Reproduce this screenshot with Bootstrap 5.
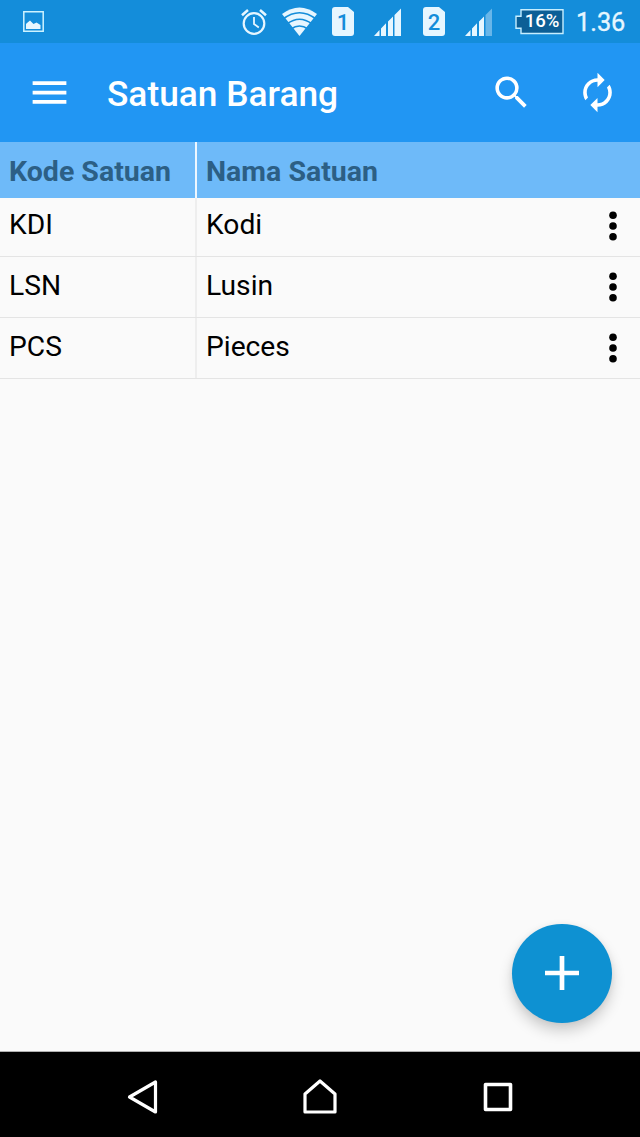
<!DOCTYPE html>
<html lang="id">
<head>
<meta charset="utf-8">
<meta name="viewport" content="width=device-width, initial-scale=1">
<title>Satuan Barang</title>
<link href="https://cdn.jsdelivr.net/npm/bootstrap@5.3.0/dist/css/bootstrap.min.css" rel="stylesheet">
<style>
body { font-family: Roboto, "Liberation Sans", sans-serif; background: #fafafa; color: #000; height: 1137px; overflow: hidden; }
svg { display: block; flex: none; }
.status-bar { height: 43px; background: #148dda; color: #e6f6ff; padding: 0 14px 0 22px; }
.battery { width: 49px; height: 26px; margin-left: 23px; }
.battery-label { inset: -1px 0 0 5px; font-size: 18.5px; font-weight: 500; line-height: 26px; text-align: center; color: #fff; }
.clock { font-size: 25.3px; line-height: 43px; width: 50px; margin-left: 12px; padding-top: 1px; white-space: nowrap; -webkit-text-stroke: .35px currentColor; }
.wifi { margin-left: 15px; }
.sim-one { margin-left: 15px; }
.sim-two { margin-left: 22px; }
.signal { margin-left: 20px; }
.app-bar { height: 99px; background: #2196f3; padding: 0 21px 0 27px; color: #fff; }
.app-title { font-size: 35.3px; line-height: 44px; font-weight: 500; margin: 2px 0 0 35px; }
.app-bar .btn { border: 0; padding: 0; color: #fff; }
.refresh { margin-left: 43px; }
.grid-line { height: 61px; border-bottom: 1px solid #e4e4e4; font-size: 28.2px; line-height: 34px; }
.grid-line:nth-child(2) { height: 59px; }
.grid-line:nth-child(2) .btn { padding-bottom: 3px; }
.grid-head { height: 56px; background: #6ebaf9; color: #2c5f85; font-weight: 700; border: 0; font-size: 28.5px; }
.code-col { width: 197px; padding-left: 9px; border-right: 2px solid #eee; }
.grid-head .code-col { border-color: #eef7ff; }
.name-col { padding-left: 9px; }
.grid-line .btn { width: 54px; padding: 0; border: 0; }
.cell-text { padding-top: 12px; }
.grid-line:nth-child(2) .cell-text { padding-top: 10px; }
.grid-head .cell-text { padding-top: 13px; }
.fab { right: 28.5px; bottom: 28px; width: 99.5px; height: 99.5px; background: #0e91d2 !important; box-shadow: 0 8px 14px rgba(0,0,0,.18), 0 1px 6px rgba(0,0,0,.06); }
.nav-bar { height: 86px; background: #000; border-top: 1px solid #b0b0b0; padding: 5px 53px 0; }
</style>
</head>
<body class="d-flex flex-column">
<header>
  <div class="status-bar d-flex align-items-center justify-content-between">
    <svg width="23" height="23" viewBox="0 0 23 23"><path d="M1.8 1.8h19.4v19.4H1.8z" fill="none" stroke="#cdf3ff" stroke-width="1.5"/><path d="M4 19v-5l1-1 3-2.500 3.500 3.500 3-1.500 4 2.500V19z" fill="#e6f6ff"/></svg>
    <div class="d-flex align-items-center">
      <svg width="26" height="28" viewBox="0 0 26 28" fill="none" stroke="currentColor"><circle cx="13" cy="15.500" r="10.300" stroke-width="2.200"/><path d="M13 9v7l4.800 3.400" stroke-width="1.800"/><path d="M1 7.200 7 2M25 7.200 19 2" stroke-width="2.600"/></svg>
      <svg class="wifi" width="35" height="29" viewBox="0 0 35 29"><path d="M0 7Q17.5-6 35 7L17.5 29z" fill="currentColor"/><path d="M1 12Q17.5-.5 34 12M5 17Q17.5 7.500 30 17M9 22Q17.5 16 26 22" fill="none" stroke="#148dda" stroke-width="1.700"/></svg>
      <svg class="sim-one" width="22" height="29" viewBox="0 0 22 29"><path d="M3 0h13l6 5v21a3 3 0 0 1-3 3H3a3 3 0 0 1-3-3V3a3 3 0 0 1 3-3z" fill="currentColor"/><text x="11" y="22.500" text-anchor="middle" font-size="22" font-weight="500" fill="#148dda">1</text></svg>
      <svg class="signal" width="27" height="28" viewBox="0 0 27 28" fill="currentColor"><path d="M0 28 5.500 22v6zM7 28v-7.500l5-5.200V28zM14 28V13.500l5-5V28zM20.500 28V7L27 .5V28z"/></svg>
      <svg class="sim-two" width="22" height="29" viewBox="0 0 22 29"><path d="M3 0h13l6 5v21a3 3 0 0 1-3 3H3a3 3 0 0 1-3-3V3a3 3 0 0 1 3-3z" fill="currentColor"/><text x="11" y="22.500" text-anchor="middle" font-size="22" font-weight="500" fill="#148dda">2</text></svg>
      <svg class="signal" width="27" height="28" viewBox="0 0 27 28" fill="currentColor"><path d="M0 28 5.500 22v6zM7 28v-7.500l5-5.200V28zM14 28V13.500l5-5V28z"/><path d="M20.500 28V7L27 .5V28z" opacity=".4"/></svg>
      <div class="battery position-relative">
        <svg width="49" height="26" viewBox="0 0 49 26"><path d="M6 .8h42v23.700H6v-5.300H1v-12h5z" fill="#0c5f96" stroke="#c6eeff" stroke-width="1.400"/></svg>
        <span class="battery-label position-absolute">16%</span>
      </div>
      <span class="clock">1.36</span>
    </div>
  </div>
  <nav class="app-bar d-flex align-items-center">
    <button class="btn" aria-label="Menu"><svg width="45" height="45" viewBox="0 0 24 24" fill="currentColor"><path d="M3 18h18v-2H3v2zm0-5h18v-2H3v2zm0-7v2h18V6H3z"/></svg></button>
    <h1 class="app-title mb-0">Satuan Barang</h1>
    <button class="btn ms-auto" aria-label="Cari"><svg width="43" height="43" viewBox="0 0 24 24" fill="currentColor"><path d="M15.500 14h-.79l-.28-.27A6.471 6.471 0 0 0 16 9.500 6.500 6.500 0 1 0 9.500 16c1.610 0 3.090-.59 4.230-1.570l.27.280v.79l5 4.990L20.490 19l-4.990-5zm-6 0C7.010 14 5 11.990 5 9.500S7.010 5 9.500 5 14 7.010 14 9.500 11.990 14 9.500 14z"/></svg></button>
    <button class="btn refresh" aria-label="Segarkan"><svg width="43" height="43" viewBox="0 0 24 24" fill="currentColor"><path d="M12 6v3l4-4-4-4v3c-4.420 0-8 3.580-8 8 0 1.570.46 3.030 1.240 4.260L6.700 14.800A5.870 5.870 0 0 1 6 12c0-3.310 2.690-6 6-6zm6.760 1.740L17.300 9.200c.44.840.7 1.790.7 2.800 0 3.310-2.690 6-6 6v-3l-4 4 4 4v-3c4.420 0 8-3.580 8-8 0-1.570-.46-3.030-1.240-4.260z"/></svg></button>
  </nav>
</header>
<main class="flex-grow-1 position-relative">
  <div class="grid-line grid-head d-flex"><div class="code-col cell-text">Kode Satuan</div><div class="name-col cell-text">Nama Satuan</div></div>
  <div class="grid-line d-flex"><div class="code-col cell-text">KDI</div><div class="name-col cell-text flex-grow-1">Kodi</div><button class="btn" aria-label="Opsi"><svg class="mx-auto" width="8" height="30" viewBox="0 0 8 30"><circle cx="4" cy="4.300" r="3.800"/><circle cx="4" cy="15" r="3.800"/><circle cx="4" cy="25.700" r="3.800"/></svg></button></div>
  <div class="grid-line d-flex"><div class="code-col cell-text">LSN</div><div class="name-col cell-text flex-grow-1">Lusin</div><button class="btn" aria-label="Opsi"><svg class="mx-auto" width="8" height="30" viewBox="0 0 8 30"><circle cx="4" cy="4.300" r="3.800"/><circle cx="4" cy="15" r="3.800"/><circle cx="4" cy="25.700" r="3.800"/></svg></button></div>
  <div class="grid-line d-flex"><div class="code-col cell-text">PCS</div><div class="name-col cell-text flex-grow-1">Pieces</div><button class="btn" aria-label="Opsi"><svg class="mx-auto" width="8" height="30" viewBox="0 0 8 30"><circle cx="4" cy="4.300" r="3.800"/><circle cx="4" cy="15" r="3.800"/><circle cx="4" cy="25.700" r="3.800"/></svg></button></div>
  <button class="fab btn rounded-circle border-0 position-absolute d-flex align-items-center justify-content-center p-0" aria-label="Tambah"><svg width="34" height="34" viewBox="0 0 34 34"><path d="M17 0v34M0 17h34" stroke="#fff" stroke-width="4.700"/></svg></button>
</main>
<footer class="nav-bar d-flex align-items-center justify-content-around">
  <svg width="36" height="36" viewBox="0 0 36 36" fill="none" stroke="#fff" stroke-width="3.200" stroke-linejoin="round"><path d="M31.500 3v30L5.500 18z"/></svg>
  <svg width="36" height="36" viewBox="0 0 36 36" fill="none" stroke="#fff" stroke-width="3.200" stroke-linejoin="round"><path d="M18 2 33 15v18H3V15z"/></svg>
  <svg width="36" height="36" viewBox="0 0 36 36" fill="none" stroke="#fff" stroke-width="3.600" stroke-linejoin="round"><path d="M5.500 5.500h25v25h-25z"/></svg>
</footer>
<script src="https://cdn.jsdelivr.net/npm/bootstrap@5.3.0/dist/js/bootstrap.bundle.min.js"></script>
</body>
</html>
